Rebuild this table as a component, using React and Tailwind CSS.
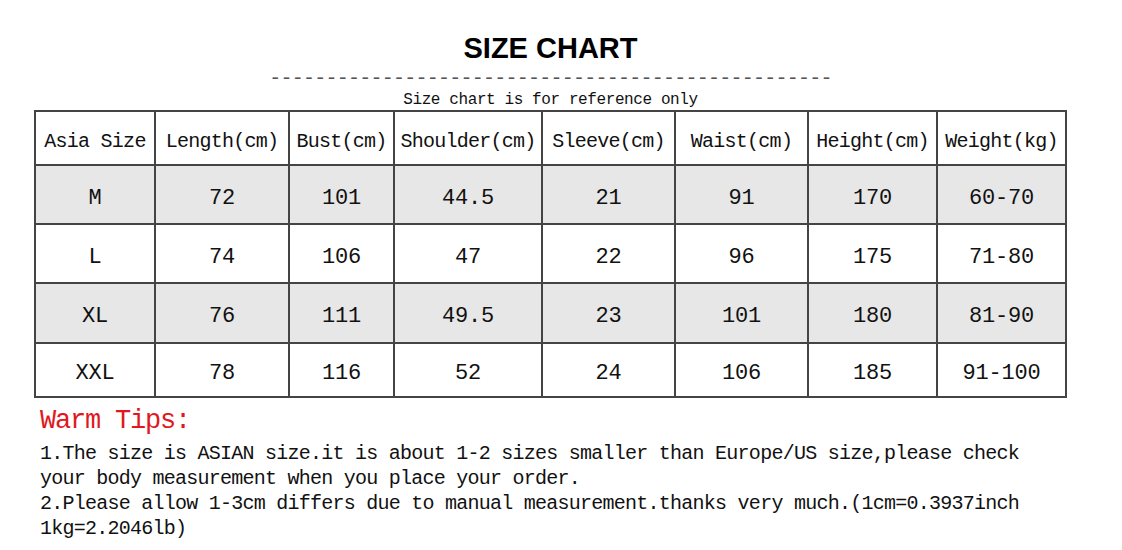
const cols = [120, 134, 105, 148, 133, 133, 129, 129];

const headers = [
  'Asia Size',
  'Length(cm)',
  'Bust(cm)',
  'Shoulder(cm)',
  'Sleeve(cm)',
  'Waist(cm)',
  'Height(cm)',
  'Weight(kg)',
];

const rows = [
  { h: 'h-[59px]', bg: 'bg-[#e7e7e7]', cells: ['M', '72', '101', '44.5', '21', '91', '170', '60-70'] },
  { h: 'h-[59px]', bg: 'bg-white', cells: ['L', '74', '106', '47', '22', '96', '175', '71-80'] },
  { h: 'h-[60px]', bg: 'bg-[#e7e7e7]', cells: ['XL', '76', '111', '49.5', '23', '101', '180', '81-90'] },
  { h: 'h-[54px]', bg: 'bg-white', cells: ['XXL', '78', '116', '52', '24', '106', '185', '91-100'] },
];

const mono = 'font-["Liberation_Mono",_"DejaVu_Sans_Mono",_monospace]';

function Cell({ children, width, className }) {
  return (
    <div
      className={`flex items-center justify-center border-r-2 border-b-2 border-[#444] pt-[7px] ${className}`}
      style={{ width }}
    >
      {children}
    </div>
  );
}

export default function App() {
  return (
    <div className="min-h-[550px] w-[1122px] bg-white text-[#111]">
      <div className="ml-[34px] flex w-[1033px] flex-col items-center">
        <h1 className='mt-[30px] font-["Liberation_Sans",_Arial,_sans-serif] text-[29px] leading-[36px] font-bold text-black'>
          SIZE CHART
        </h1>
        <div className={`${mono} mt-[3px] text-[20px] leading-[20px] tracking-[-0.75px] text-[#555] whitespace-nowrap`}>
          {'-'.repeat(50)}
        </div>
        <p className={`${mono} mt-[1px] text-[16px] leading-[20px] tracking-[-0.4px]`}>
          Size chart is for reference only
        </p>

        <div className={`${mono} w-full border-t-2 border-l-2 border-[#444]`}>
          <div className="flex h-[54px] bg-white">
            {headers.map((t, i) => (
              <Cell key={t} width={cols[i]} className="text-[20px] tracking-[-0.75px] whitespace-nowrap">
                {t}
              </Cell>
            ))}
          </div>
          {rows.map((r) => (
            <div key={r.cells[0]} className={`flex ${r.h} ${r.bg}`}>
              {r.cells.map((t, i) => (
                <Cell key={i} width={cols[i]} className="text-[22px] tracking-[-0.2px]">
                  {t}
                </Cell>
              ))}
            </div>
          ))}
        </div>
      </div>

      <div className={`${mono} ml-[40px] mt-[8px]`}>
        <h2 className="text-[27px] leading-[30px] tracking-[-1.2px] text-[#e0191f]">Warm Tips:</h2>
        <p className="mt-[5px] text-[20px] leading-[25px] tracking-[-0.75px] whitespace-nowrap">
          1.The size is ASIAN size.it is about 1-2 sizes smaller than Europe/US size,please check
          <br />
          your body measurement when you place your order.
          <br />
          2.Please allow 1-3cm differs due to manual measurement.thanks very much.(1cm=0.3937inch
          <br />
          1kg=2.2046lb)
        </p>
      </div>
    </div>
  );
}
